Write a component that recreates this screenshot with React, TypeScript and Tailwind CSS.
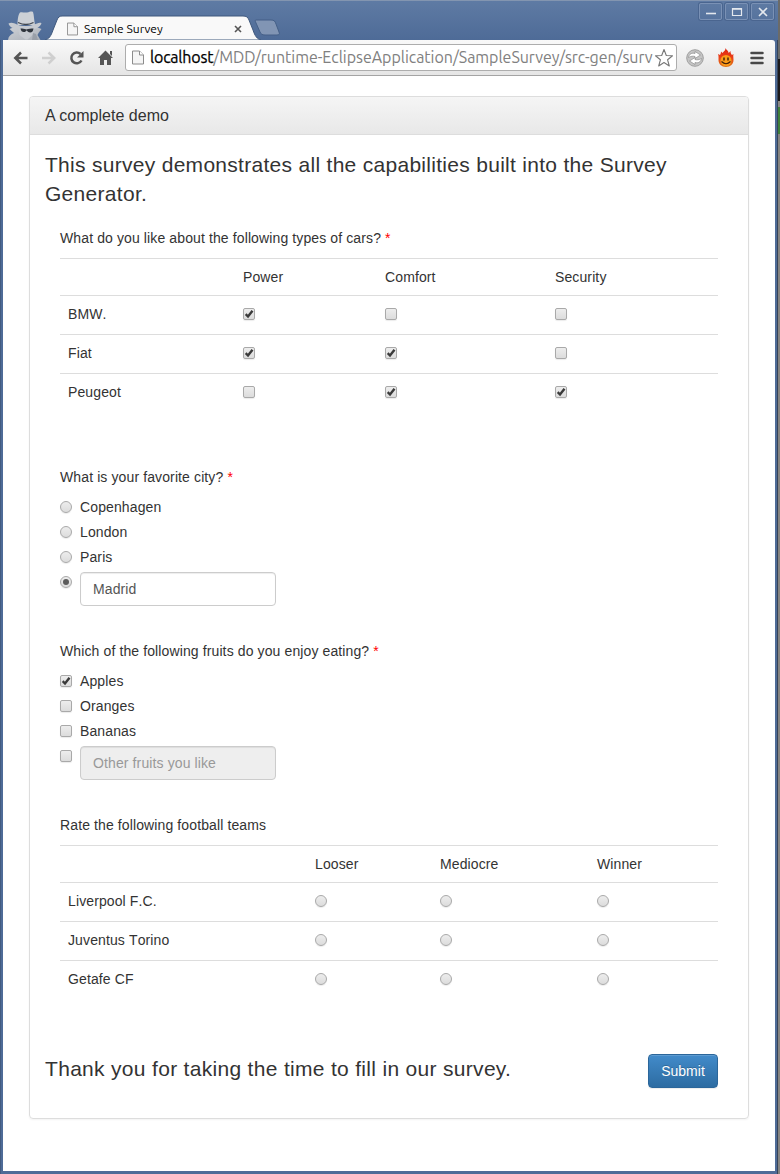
import React from "react";

function Check({ on = false }: { on?: boolean }) {
  return (
    <span
      role="checkbox"
      aria-checked={on}
      className="block h-3 w-3 shrink-0 rounded-[2px] border border-[#a9a9a9] bg-linear-to-b from-[#ededed] to-[#dcdcdc] shadow-[0_1px_1px_rgba(0,0,0,0.08)]"
    >
      {on && (
        <svg viewBox="0 0 10 10" className="block h-[10px] w-[10px]">
          <path d="M1.700 5.200 4 7.500 8.500 1.800" fill="none" stroke="#3a3a3a" strokeWidth="2.400" />
        </svg>
      )}
    </span>
  );
}

function Radio({ on = false }: { on?: boolean }) {
  return (
    <span
      role="radio"
      aria-checked={on}
      className="flex h-3 w-3 shrink-0 items-center justify-center rounded-full border border-[#a9a9a9] bg-linear-to-b from-[#ededed] to-[#dcdcdc] shadow-[0_1px_1px_rgba(0,0,0,0.08)]"
    >
      {on && <span className="h-[6px] w-[6px] rounded-full bg-[#5c5c5c]" />}
    </span>
  );
}

function PageIcon({ className }: { className: string }) {
  return (
    <svg viewBox="0 0 12 14" className={className}>
      <path d="M.5.5h7l4 4v9H.5z" fill="#f5f5f5" stroke="#8c8c8c" />
      <path d="M7.5.5v4h4" fill="#fff" stroke="#8c8c8c" />
    </svg>
  );
}

function Incognito() {
  return (
    <svg viewBox="0 0 36 29" className="h-[29px] w-9">
      <defs>
        <linearGradient id="coat" x1="0" y1="0" x2="1" y2="1">
          <stop stopColor="#cfd2d7" />
          <stop offset="1" stopColor="#a9afb7" />
        </linearGradient>
      </defs>
      <path d="M1 29c.5-4 3-6 6-7l-4.500-4L10 15h17l7.500 3-3 4-1 2 3 5z" fill="url(#coat)" />
      <path d="M11 17h16l-1.500 7-5 4.500h-2l-6-4.500z" fill="#c6cad0" />
      <path d="m26 22-1 7h6l-2-6z" fill="#999fa8" />
      <path d="M10.500 14c0-6 1-11 2.500-12.500C15 .5 17 2 20 1.500S24 0 26 1c1 3 1 8 2 13z" fill="#cdd1d6" />
      <path d="M1.500 12.500C5 11 7 12.500 10 13.500c5 2 12 2 17 0 3-1 5-2.500 7.500-1.500-1 4-5 5.500-8 6H10c-4-.5-7.500-2-8.500-5.500z" fill="#c6cad0" />
      <path d="M11 11.500q8 4 15.500 0" fill="none" stroke="#40464e" strokeWidth="1.300" />
      <path d="M13.500 17.500c2 0 4 0 5.800 1 2.200-1 5-1 7.200-1-.5 3-1.500 4-3.300 4s-2.900-1.500-3.500-2.300c-.7.900-1.400 1.800-3 1.800s-2.800-1-3.200-3.500z" fill="#2f353d" />
    </svg>
  );
}

function WindowButton({ children }: { children: React.ReactNode }) {
  return (
    <span className="flex h-[17px] w-[23px] items-center justify-center rounded-[2px] border border-[#7a91b5] shadow-[0_0_0_1px_#4a658f]">
      <svg viewBox="0 0 12 12" className="h-3 w-3" fill="none" stroke="#e4e8ee" strokeWidth="1.600">
        {children}
      </svg>
    </span>
  );
}

function TitleBar() {
  return (
    <div className="relative h-10 bg-linear-to-b from-[#5f7ba4] to-[#4e6b97] shadow-[inset_0_1px_0_#8395b0]">
      <div className="absolute top-[11px] left-[7px]">
        <Incognito />
      </div>
      <svg viewBox="0 0 240 25" className="absolute top-[15px] left-[45px] h-[25px] w-[240px]">
        <path d="M0 25c4-1 6-4 8-10l4-10c1-3 3-4 5-4h181c3 0 5 1 6 4l4 10c2 6 4 9 8 10z" fill="#f9f9f9" stroke="#3f587d" />
        <path d="M211 5h15c3 0 4 1 5 4l3 8c1 2 0 3-2 3h-12c-3 0-4-1-5-3l-4-9c-1-2-1-3 0-3z" fill="#8195b4" stroke="#445f87" />
      </svg>
      <div className="relative ml-[67px] flex h-full w-[177px] items-center pt-[18px]">
        <PageIcon className="h-[14px] w-[11px]" />
        <span className="ml-[6px] text-[12px] leading-none tracking-[0.02px] whitespace-nowrap text-black">Sample Survey</span>
        <svg viewBox="0 0 8 8" className="mr-[2px] ml-auto h-2 w-2">
          <path d="m1 1 6 6M7 1 1 7" stroke="#555" strokeWidth="1.600" />
        </svg>
      </div>
      <div className="absolute top-[3px] right-[4px] flex gap-[3px]">
        <WindowButton><path d="M1 7.500h10" /></WindowButton>
        <WindowButton><path d="M1.500 2.500h9v7h-9z" strokeWidth="1.200" /><path d="M1 3h10" /></WindowButton>
        <WindowButton><path d="m2 2 8 8M10 2 2 10" /></WindowButton>
      </div>
    </div>
  );
}

function Toolbar() {
  return (
    <div className="flex h-9 items-center rounded-tr-[3px] border-b border-[#a4a4a4] bg-linear-to-b from-[#f9f9f9] to-[#e5e5e5] pl-[10px]">
      <svg viewBox="0 0 104 18" className="h-[18px] w-[104px] shrink-0" fill="none">
        <path d="M14.500 9H2M8 3.500 2.300 9 8 14.500" stroke="#555" strokeWidth="2.500" />
        <path d="M29 9h12M35.500 3.500 41.200 9l-5.700 5.500" stroke="#cfcfcf" strokeWidth="2.500" />
        <path d="M68.500 11.500A5.400 5.400 0 1 1 67.500 5" stroke="#555" strokeWidth="2.500" />
        <path d="M70.500 2v6.500H64z" fill="#555" />
        <path d="M92.500 1.500 100 9h-2v7h-4v-5h-3v5h-4V9h-2zM97 2h2v5l-2-2z" fill="#555" />
      </svg>
      <div className="ml-2 flex h-[27px] w-[552px] shrink-0 items-center rounded-[3px] border border-[#adadad] bg-white pl-[6px]">
        <PageIcon className="h-[15px] w-3 shrink-0" />
        <span className="ml-[6px] h-6 w-[504px] overflow-hidden text-[16px] leading-[23px] tracking-[-0.03px] whitespace-nowrap text-[#808080]">
          <span className="tracking-[-0.2px] text-black [-webkit-text-stroke:0.25px_black]">localhost</span>/MDD/runtime-EclipseApplication/SampleSurvey/src-gen/surv
        </span>
        <svg viewBox="0 0 20 20" className="h-5 w-5 shrink-0">
          <path d="m10 1.500 2.300 6 6.200.3-4.900 4 1.700 6.200L10 14.500 4.700 18l1.700-6.200-4.900-4 6.200-.3z" fill="#fff" stroke="#777" strokeWidth="1.100" strokeLinejoin="round" />
        </svg>
      </div>
      <svg viewBox="0 0 18 18" className="ml-[9px] h-[18px] w-[18px] shrink-0">
        <circle cx="9" cy="9" r="8.300" fill="#c4c4c4" stroke="#989898" strokeWidth=".9" />
        <path d="M2.500 8.500C3 5 6 3.500 9 4.500V2.500L14.500 6 9 9.500v-2C7 7 5 7 2.500 8.500z" fill="#fff" stroke="#8e8e8e" strokeWidth=".7" />
        <path d="M15.500 9.500C15 13 12 14.500 9 13.500v2L3.500 12 9 8.500v2c2 .5 4 .5 6.500-1z" fill="#fff" stroke="#8e8e8e" strokeWidth=".7" />
      </svg>
      <svg viewBox="0 0 16 20" className="ml-[14px] h-5 w-4 shrink-0">
        <defs>
          <linearGradient id="flame" x1="0" y1="0" x2="0" y2="1">
            <stop stopColor="#dd2412" />
            <stop offset=".5" stopColor="#ea3f18" />
            <stop offset="1" stopColor="#e07a18" />
          </linearGradient>
        </defs>
        <path d="M7.500 0c.5 2 3 2.500 3.200 5L12.500 3c0 3 1 3 1.500 4l1.500-1c-.5 2 0 3.500 0 6 0 4-3 7-7.500 7S.5 16 .5 12c0-2 .3-4-.5-6l2 1c.5-1 1-2 1-3.500l1.500 1.500c1-1.500 3-2 3-5z" fill="url(#flame)" />
        <circle cx="8" cy="12.500" r="5.500" fill="#fb9c19" />
        <path d="M6 9.500v3M10 9.500v3" fill="none" stroke="#3b1b0b" strokeWidth="1.400" />
        <path d="M3.500 13.500q4.500 4.500 9 0" fill="none" stroke="#3b1b0b" strokeWidth="1.100" />
      </svg>
      <svg viewBox="0 0 14 14" className="ml-4 h-[14px] w-[14px] shrink-0">
        <path d="M1.500 2h11M1.500 7h11M1.500 12h11" stroke="#484848" strokeWidth="2.500" strokeLinecap="round" />
      </svg>
    </div>
  );
}

type Row = { label: string; values: boolean[] };

function Grid({ columns, headings, rows, kind }: { columns: string; headings: string[]; rows: Row[]; kind: "check" | "radio" }) {
  return (
    <div>
      <div className={`grid h-[37px] items-center border-t border-[#ddd] ${columns}`}>
        <span />
        {headings.map((h) => (
          <span key={h} className="pl-2">{h}</span>
        ))}
      </div>
      {rows.map((r) => (
        <div key={r.label} className={`grid h-[39px] border-t border-[#ddd] pt-2 ${columns}`}>
          <span className="pl-2">{r.label}</span>
          {r.values.map((v, i) => (
            <span key={i} className="pt-1 pl-2">{kind === "check" ? <Check on={v} /> : <Radio on={v} />}</span>
          ))}
        </div>
      ))}
    </div>
  );
}

function Question({ children, required = false }: { children: React.ReactNode; required?: boolean }) {
  return (
    <div className="mb-[10px] h-5">
      {children}
      {required && <span className="text-[#f00]"> *</span>}
    </div>
  );
}

function Option({ label, control }: { label: string; control: React.ReactNode }) {
  return (
    <div className="flex h-[25px] gap-2">
      <span className="pt-1">{control}</span>
      <span>{label}</span>
    </div>
  );
}

function Desktop() {
  return (
    <div className="flex w-[2px] flex-col bg-[#85837f]">
      <div className="h-[59px] bg-[#6b6b69]" />
      <div className="h-[42px] bg-[#1c1a1c]" />
      <div className="h-[6px] bg-[#8a8884]" />
      <div className="h-[27px] bg-[#3f7f3a]" />
    </div>
  );
}

export default function App() {
  return (
    <div className="flex h-[1174px] w-[780px] overflow-hidden font-['Liberation_Sans',Arial,sans-serif] text-[14px] leading-5 text-[#333]">
      <div className="flex w-[778px] flex-col bg-[#4e6b97] shadow-[inset_1px_0_0_#435b80,inset_-1px_0_0_#35435a]">
        <div className="font-[Ubuntu,'Noto_Sans',sans-serif]">
          <TitleBar />
          <div className="mr-[3px] ml-[3px]"><Toolbar /></div>
        </div>
        <main className="mr-[3px] mb-[3px] ml-[3px] flex-1 bg-white pt-5 pr-[26px] pl-[26px]">
          <section className="h-[1023px] rounded-[4px] border border-[#ddd] shadow-[0_1px_2px_rgba(0,0,0,0.05)]">
            <h1 className="h-[38px] rounded-t-[3px] border-b border-[#ddd] bg-linear-to-b from-[#f5f5f5] to-[#e8e8e8] px-[15px] text-[16px] leading-[37px] tracking-[0.02px]">A complete demo</h1>
            <div className="px-[15px] pt-[15px]">
              <p className="mb-5 text-[21px] leading-[29px] tracking-[0.29px]">This survey demonstrates all the capabilities built into the Survey Generator.</p>
              <div className="px-[15px] tracking-[0.115px] [font-kerning:none]">
                <section className="h-[239px]">
                  <Question required>What do you like about the following types of cars?</Question>
                  <Grid
                    kind="check"
                    columns="grid-cols-[175px_142px_170px_171px]"
                    headings={["Power", "Comfort", "Security"]}
                    rows={[
                      { label: "BMW.", values: [true, false, false] },
                      { label: "Fiat", values: [true, true, false] },
                      { label: "Peugeot", values: [false, true, true] },
                    ]}
                  />
                </section>
                <section className="h-[174px]">
                  <Question required>What is your favorite city?</Question>
                  <Option label="Copenhagen" control={<Radio />} />
                  <Option label="London" control={<Radio />} />
                  <Option label="Paris" control={<Radio />} />
                  <div className="flex gap-2">
                    <span className="pt-1"><Radio on /></span>
                    <input readOnly defaultValue="Madrid" className="h-[34px] w-[196px] rounded-[4px] border border-[#ccc] bg-white px-3 text-[#555] shadow-[inset_0_1px_1px_rgba(0,0,0,0.075)] outline-none" />
                  </div>
                </section>
                <section className="h-[174px]">
                  <Question required>Which of the following fruits do you enjoy eating?</Question>
                  <Option label="Apples" control={<Check on />} />
                  <Option label="Oranges" control={<Check />} />
                  <Option label="Bananas" control={<Check />} />
                  <div className="flex gap-2">
                    <span className="pt-1"><Check /></span>
                    <input disabled placeholder="Other fruits you like" className="h-[34px] w-[196px] rounded-[4px] border border-[#ccc] bg-[#eee] px-3 shadow-[inset_0_1px_1px_rgba(0,0,0,0.075)] placeholder:text-[#999]" />
                  </div>
                </section>
                <section className="h-[239px]">
                  <Question>Rate the following football teams</Question>
                  <Grid
                    kind="radio"
                    columns="grid-cols-[247px_125px_157px_129px]"
                    headings={["Looser", "Mediocre", "Winner"]}
                    rows={[
                      { label: "Liverpool F.C.", values: [false, false, false] },
                      { label: "Juventus Torino", values: [false, false, false] },
                      { label: "Getafe CF", values: [false, false, false] },
                    ]}
                  />
                </section>
              </div>
              <div className="flex justify-between pr-[15px]">
                <p className="text-[21px] leading-[30px] tracking-[0.31px]">Thank you for taking the time to fill in our survey.</p>
                <button className="h-[34px] w-[70px] rounded-[4px] border border-[#2b669a] bg-linear-to-b from-[#428bca] to-[#2d6ca2] text-white shadow-[inset_0_1px_0_rgba(255,255,255,0.15),0_1px_1px_rgba(0,0,0,0.075)] [text-shadow:0_-1px_0_rgba(0,0,0,0.2)]">Submit</button>
              </div>
            </div>
          </section>
        </main>
      </div>
      <Desktop />
    </div>
  );
}
